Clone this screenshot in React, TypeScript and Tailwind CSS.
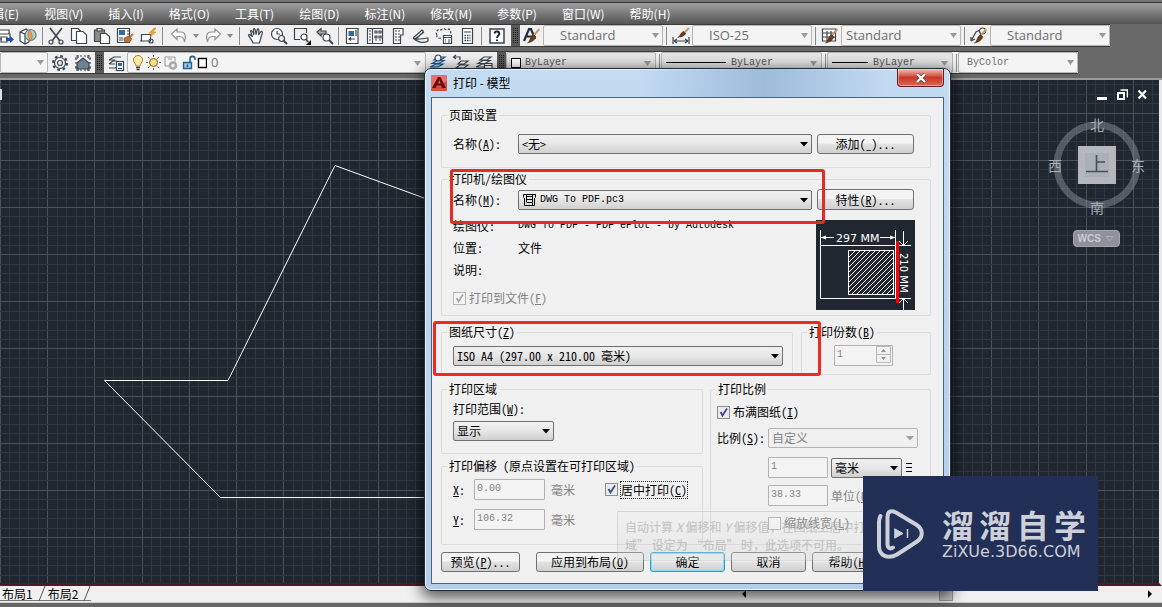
import React from "react";

type Kids = { children?: React.ReactNode };

const menus = ["编辑(E)", "视图(V)", "插入(I)", "格式(O)", "工具(T)", "绘图(D)", "标注(N)", "修改(M)", "参数(P)", "窗口(W)", "帮助(H)"];

/* ---------- toolbar pieces ---------- */

function Tool({ label, children }: Kids & { label: string }) {
  return (
    <button type="button" aria-label={label} className="flex h-full w-[23px] shrink-0 items-center justify-center">
      <svg width="18" height="18" viewBox="0 0 18 18" fill="none" stroke="#3c4650" strokeWidth="1.2">
        {children}
      </svg>
    </button>
  );
}

function Drop({ label }: { label: string }) {
  return (
    <button type="button" aria-label={label} className="flex h-full w-[11px] shrink-0 items-center justify-center">
      <svg width="6" height="4" viewBox="0 0 6 4">
        <path d="M0 0H6L3 4Z" fill="#8a8a8a" />
      </svg>
    </button>
  );
}

function Sep() {
  return <span className="mx-px h-[18px] w-px shrink-0 bg-[#8b8b8b]" />;
}

function Grip() {
  return (
    <span className="flex h-full w-[9px] shrink-0 items-center justify-center bg-[#5a5a5a]">
      <svg width="5" height="15" viewBox="0 0 5 15" fill="#1c1c1c">
        {[0, 2, 4, 6, 8, 10, 12, 14].map((y) => (
          <g key={y}>
            <rect x="0" y={y} width="1" height="1" />
            <rect x="2" y={y} width="1" height="1" />
            <rect x="4" y={y} width="1" height="1" />
          </g>
        ))}
      </svg>
    </span>
  );
}

function StyleSelect({ label, value, width, pad, serif }: { label: string; value: string; width: string; pad: string; serif?: boolean }) {
  return (
    <span className={`relative h-full shrink-0 ${width}`}>
      <select
        aria-label={label}
        className={`block h-full w-full appearance-none rounded-[2px] border border-[#b5b5b5] bg-[#f4f4f4] text-[#6e6e6e] ${pad} ${
          serif ? "font-['Liberation_Mono',monospace] text-[10px]" : "font-['Open_Sans','Noto_Sans_CJK_SC',sans-serif] text-[13px]"
        }`}
      >
        <option>{value}</option>
      </select>
      <svg className="pointer-events-none absolute top-[8px] right-[4px]" width="7" height="5" viewBox="0 0 7 5">
        <path d="M0 0H7L3.500 5Z" fill="#9a9a9a" />
      </svg>
    </span>
  );
}

function LineSelect({ label, width, line }: { label: string; width: string; line: string }) {
  return (
    <span className={`relative flex h-full shrink-0 items-center rounded-[2px] border border-[#b5b5b5] bg-[#e4e4e4] pr-[18px] ${width}`}>
      <span className={`ml-1 h-px shrink-0 bg-black ${line}`} />
      <select aria-label={label} className="ml-[5px] min-w-0 flex-1 appearance-none font-['Liberation_Mono',monospace] text-[10px] text-[#555]">
        <option>ByLayer</option>
      </select>
      <svg className="pointer-events-none absolute top-[8px] right-[4px]" width="7" height="5" viewBox="0 0 7 5">
        <path d="M0 0H7L3.500 5Z" fill="#9a9a9a" />
      </svg>
    </span>
  );
}

const brush = (
  <>
    <path d="M16.500 2L10 9" stroke="#c89a68" strokeWidth="2" />
    <path d="M10.500 7.500L13 10C11 14 8 15 4.500 16C7.500 14 6.500 10.500 10.500 7.500Z" fill="#6a3c1c" stroke="#4a2a12" strokeWidth=".6" />
  </>
);

function StandardBar() {
  return (
    <div className="flex h-[23px] w-max items-center border-y border-[#3a3a3a] bg-[#f0f0f0]">
      <div className="-ml-[7px] flex h-full items-center">
        <Tool label="发布">
          <path d="M3 7V3H13V7M2 7H14V12H10M2 7V12H6M5 10H11V15H5Z" fill="#fff" />
          <path d="M10 11H14V9L18 12.500L14 16V14H10Z" fill="#1e50a8" stroke="none" />
        </Tool>
        <Tool label="三维打印">
          <path d="M1 5L7 2L10 4V15L6 17L1 14ZM1 5L6 7V17" fill="#fff" />
          <circle cx="11.500" cy="8" r="5.500" fill="#a8d8c0" stroke="#5b7c88" />
          <path d="M11 3C8 6 9 10 11 13C15 12 13 7 11 3Z" fill="#e89a58" stroke="#c86d48" strokeWidth=".7" />
        </Tool>
      </div>
      <span className="w-[2px]" />
      <Sep />
      <Tool label="剪切">
        <path d="M3 1L13 14M15 1L5 14" strokeWidth="1.700" />
        <circle cx="4" cy="15" r="2" />
        <circle cx="14" cy="15" r="2" />
      </Tool>
      <Tool label="复制">
        <path d="M1.500 1.500H8L11 4.500V13.500H1.500Z" fill="#fff" />
        <path d="M6.500 4.500H13L16.500 8V16.500H6.500Z" fill="#fff" />
      </Tool>
      <Tool label="粘贴">
        <path d="M1.500 3H11.500V14.500H1.500Z" fill="#8f8d83" />
        <path d="M4 1.500H9V4H4Z" fill="#ddd" />
        <path d="M7.500 6.500H13L16.500 9.500V16.500H7.500Z" fill="#fff" />
      </Tool>
      <Tool label="特性匹配">
        <path d="M1.500 1.500H13.500V15.500H1.500Z" fill="#fff" />
        <path d="M3 3H9V8H3Z" fill="#2e6ca4" stroke="none" />
        <path d="M11 4H13M11 7H13M3 11H7M3 13H7" />
        <path d="M17 7L13 11" stroke="#b97a3d" strokeWidth="2" />
        <path d="M8 11L13 9L16 12L13 16L8 14Z" fill="#b5763b" stroke="#7c4820" strokeWidth=".6" />
      </Tool>
      <Tool label="块编辑器">
        <path d="M2.500 7.500H11.500V14H2.500ZM1 14H4M10 14A2 2 0 1 0 14 14A2 2 0 1 0 10 14" fill="#fff" />
        <path d="M15 1L10 6H13L11 10L17 5H14L17 1Z" fill="#f4a833" stroke="#c97e18" strokeWidth=".5" />
      </Tool>
      <span className="w-[2px]" />
      <Sep />
      <span className="w-[3px]" />
      <Tool label="放弃">
        <path d="M1.500 7L7 2V5H11C15 5 16.500 9 14.500 15C14 11 12.500 9.500 10 9.500H7V12.500Z" stroke="#929292" fill="#fafafa" />
      </Tool>
      <Drop label="放弃列表" />
      <Tool label="重做">
        <path d="M16.500 7L11 2V5H7C3 5 1.500 9 3.500 15C4 11 5.500 9.500 8 9.500H11V12.500Z" stroke="#929292" fill="#fafafa" />
      </Tool>
      <Drop label="重做列表" />
      <span className="w-[3px]" />
      <Sep />
      <span className="w-[3px]" />
      <Tool label="平移">
        <path d="M6 16C5 13 2 10 1.500 8C2.500 7 4 8 5.500 10L3.500 4C4.500 3 5.500 4 7 8L6.500 2C7.500 1 8.500 2 9 7.500L10.500 2C11.500 1.500 12.500 2 11.500 8L14 4.500C15 4 16 5 15 7L13.500 12L12.500 16Z" fill="#fff" />
      </Tool>
      <Tool label="实时缩放">
        <circle cx="7" cy="7" r="5.500" fill="#fff" />
        <path d="M7 4V7H10M11 9H12" />
        <circle cx="11.500" cy="11.500" r="3" fill="#e5eef2" />
        <path d="M13.500 13.500L17 17" strokeWidth="2" />
      </Tool>
      <Tool label="窗口缩放">
        <path d="M13.500 6V1.500H1.500V12.500H7" />
        <circle cx="11" cy="10" r="3" fill="#fff" />
        <path d="M13 12L15 15" strokeWidth="1.800" />
        <path d="M18 13V18H13Z" fill="#000" stroke="none" />
      </Tool>
      <Tool label="缩放上一个">
        <path d="M1 5L5 1.500V4H10V7H5V9Z" fill="#aaa" />
        <circle cx="10.500" cy="10.500" r="3.500" fill="#fff" />
        <path d="M13 13L17 17" strokeWidth="2" />
      </Tool>
      <span className="w-px" />
      <Sep />
      <Tool label="特性">
        <path d="M3.500 1.500H15V16.500H3.500Z" fill="#fff" />
        <path d="M5.500 4H11V9H5.500Z" fill="#2e6ca4" stroke="none" />
        <path d="M13 3V9M6 12H12M8 10.500L6 12L8 13.500" />
      </Tool>
      <Tool label="设计中心">
        <path d="M1.500 1.500H16.500V16.500H1.500ZM6.500 1.500V16.500" fill="#fff" />
        <path d="M3 4H5M3 7H5M3 10H5M3 13H5M9 4H11V6H9ZM13 4H15V6H13ZM9 9H11V11H9ZM13 9H15V11H13ZM9 13H11M13 13H15" />
      </Tool>
      <Tool label="工具选项板">
        <path d="M4.500 1.500H14V8H11.500V16.500H4.500Z" fill="#fff" />
        <path d="M6 4H8M6 7H8M6 10H8M6 13H8M9 4H11M9 7H11M9 10H11M9 13H11" />
      </Tool>
      <Tool label="图纸集">
        <path d="M1 11L10 3C12 3 11 6 9 7L5 11M3 12L12 5M1 11C6 14 10 11 16 11V14C11 17 5 15 1 11Z" fill="#eee" />
      </Tool>
      <Tool label="标记集">
        <path d="M2 8C0 5 3 1 6 3C9 0 11 4 14 2C17 4 15 6 16 8M2 8C1 10 3 12 6 11" strokeDasharray="2.500 1.500" />
        <path d="M8.500 8.500H16.500V16.500H8.500ZM8.500 10.500H16.500M10 13H11M13 13H15M10 15H11M13 15H15" fill="#fff" />
      </Tool>
      <Tool label="快速计算器">
        <path d="M4.500 1.500H14.500V16.500H4.500ZM6 5H13" fill="#fff" />
        <path d="M6.500 8.500H12.500M6.500 11H12.500M6.500 13.500H12.500" strokeDasharray="1.500 1" strokeWidth="1.500" />
      </Tool>
      <span className="w-[2px]" />
      <Sep />
      <span className="w-[2px]" />
      <Tool label="帮助">
        <rect x="2" y="2" width="14" height="14" fill="#fff" strokeWidth="1.500" />
        <path d="M6.500 6.500C7 3.500 11.500 4 11.300 7C11 8.500 9 9 9 11M9 12.500V14" stroke="#152030" strokeWidth="1.800" />
      </Tool>
      <span className="w-[3px]" />
      <Grip />
      <Tool label="文字样式">
        <path d="M1 14L6 2H8L12 12M3 9.500H9" stroke="#1e2c3c" strokeWidth="2.200" />
        {brush}
      </Tool>
      <StyleSelect label="文字样式" value="Standard" width="w-[120px]" pad="pl-[16px]" />
      <span className="w-[2px]" />
      <Sep />
      <span className="w-px" />
      <Tool label="标注样式">
        <path d="M1 10V17M17 10V17M2 14H16M2 14L5 12M2 14L5 16M16 14L13 12M16 14L13 16" />
        <path d="M17 1L12 6" stroke="#c89a68" strokeWidth="2" />
        <path d="M11.500 4L14 6.500C12 10 9 10 5 11C8 9 8 6 11.500 4Z" fill="#6a3c1c" stroke="none" />
      </Tool>
      <StyleSelect label="标注样式" value="ISO-25" width="w-[120px]" pad="pl-[16px]" />
      <span className="w-[2px]" />
      <Sep />
      <span className="w-px" />
      <Tool label="表格样式">
        <path d="M1.500 2H14.500V14H1.500ZM1.500 6H14.500M1.500 10H14.500M6 4V14M10 4V14" fill="#fff" />
        {brush}
      </Tool>
      <StyleSelect label="表格样式" value="Standard" width="w-[120px]" pad="pl-[4px]" />
      <span className="w-[2px]" />
      <Sep />
      <span className="w-px" />
      <Tool label="多重引线样式">
        <path d="M1 14L6 5L10 3M1 14V10M1 14L5 12" />
        <circle cx="12.500" cy="4" r="3" fill="#fff" />
        {brush}
      </Tool>
      <StyleSelect label="多重引线样式" value="Standard" width="w-[120px]" pad="pl-[16px]" />
    </div>
  );
}

const stack = "M1 13H9L14 10H7ZM3 9.500H10L15 6.500H8ZM5 6H12L16 3H9Z";

function LayerBar() {
  return (
    <div className="mt-1 flex h-[23px] w-max items-center border-y border-[#3a3a3a] bg-[#f0f0f0]">
      <StyleSelect label="工作空间" value="" width="w-[48px]" pad="pl-1" />
      <Tool label="工作空间设置">
        <circle cx="9" cy="9" r="2.500" />
        <circle cx="9" cy="9" r="5.500" />
        <circle cx="9" cy="9" r="7" strokeDasharray="2.750 2.750" strokeWidth="2" />
      </Tool>
      <Tool label="我的工作空间">
        <path d="M3 9L9 4L15 9V15H3Z" fill="#6e8296" />
        <path d="M2 2H16V16H2Z" strokeDasharray="2 2" />
        <path d="M1 4H4M14 4H17M1 14H4M14 14H17M4 1V4M14 1V4M4 14V17M14 14V17" />
      </Tool>
      <span className="w-px" />
      <Grip />
      <Tool label="图层特性">
        <path d="M2 6L7 3H14M2 10L6 7H10M2 14H8L10 13M2 6H8M2 10H8" />
        <rect x="9.500" y="7.500" width="7" height="9" fill="#fff" />
        <path d="M11 9H15V12H11Z" fill="#2e6ca4" stroke="none" />
        <path d="M11 14.500H15" />
      </Tool>
      <div className="relative flex h-full w-[299px] shrink-0 items-center rounded-[2px] border border-[#b5b5b5] bg-[#f4f4f4] pl-[3px]">
        <svg width="76" height="18" viewBox="0 0 76 18" fill="none" stroke="#444" strokeWidth="1">
          <path d="M5 12C5 9.500 2.500 9 2.500 6C2.500 0 11.500 0 11.500 6C11.500 9 9 9.500 9 12Z" fill="#ffe9a0" stroke="#a4803c" />
          <path d="M5 13.500H9M5.500 15.500H8.500" strokeWidth="1.500" />
          <circle cx="22.500" cy="8.500" r="4" fill="#ffe08a" stroke="#7a5a20" />
          <path d="M22.500 1V3M22.500 14V16M15 8.500H17M28 8.500H30M17 3L18.500 4.500M28 3L26.500 4.500M17 14L18.500 12.500M28 14L26.500 12.500" stroke="#7a5a20" />
          <path d="M34 3H44V8M34 3V12H38M37 5H41" stroke="#999" />
          <circle cx="42" cy="11.500" r="3" stroke="#aaa" strokeWidth="2.500" />
          <path d="M52.500 8.500H60.500V14.500H52.500Z" fill="#9cc6ea" stroke="#22608e" strokeWidth="1.400" />
          <path d="M59 8V5C59 1.500 64 1.500 64 5V6M56.500 10.500V13" stroke="#22608e" strokeWidth="1.600" />
          <rect x="67.500" y="4.500" width="8" height="9" fill="#fff" stroke="#000" strokeWidth="1.400" />
        </svg>
        <select aria-label="图层" className="ml-1 flex-1 appearance-none font-['Open_Sans',sans-serif] text-[13px] text-[#777]">
          <option>0</option>
        </select>
        <svg className="pointer-events-none absolute top-[8px] right-[4px]" width="7" height="5" viewBox="0 0 7 5">
          <path d="M0 0H7L3.500 5Z" fill="#9a9a9a" />
        </svg>
      </div>
      <Tool label="置为当前">
        <path d={stack} fill="#a8cdea" stroke="#1e5a90" />
        <circle cx="9" cy="4" r="3" fill="#eef5fa" />
      </Tool>
      <Tool label="上一个图层">
        <path d="M4 14H12L16 11H8ZM6 10H12L16 7H9ZM2 3H8V6M4 1L1.500 3L4 5" fill="#fff" />
      </Tool>
      <Tool label="图层状态">
        <path d={stack} fill="#fff" />
        <path d="M9.500 9.500H17V16.500H9.500ZM9.500 11.500H17" fill="#fff" />
      </Tool>
      <span className="w-[2px]" />
      <Grip />
      <span className="relative flex h-full w-[150px] shrink-0 items-center rounded-[2px] border border-[#b5b5b5] bg-[#e4e4e4] pr-4 pl-[4px]">
        <span className="size-[10px] border border-black bg-white" />
        <select aria-label="颜色" className="ml-1 flex-1 appearance-none font-['Liberation_Mono',monospace] text-[10px] text-[#555]">
          <option>ByLayer</option>
        </select>
        <svg className="pointer-events-none absolute top-[8px] right-[4px]" width="7" height="5" viewBox="0 0 7 5">
          <path d="M0 0H7L3.500 5Z" fill="#9a9a9a" />
        </svg>
      </span>
      <span className="w-[2px]" />
      <Sep />
      <LineSelect label="线型" width="w-[161px]" line="w-[60px]" />
      <span className="w-[2px]" />
      <Sep />
      <LineSelect label="线宽" width="w-[126px]" line="w-[36px]" />
      <span className="w-[2px]" />
      <Sep />
      <StyleSelect label="打印样式" value="ByColor" width="w-[120px]" pad="pl-[8px]" serif />
    </div>
  );
}

/* ---------- drawing area ---------- */

const columns = Array.from({ length: 300 }, (_, i) => i);
const rows = Array.from({ length: 160 }, (_, i) => i);

function Drawing() {
  return (
    <div className="relative min-h-0 flex-1 overflow-hidden border-r-[3px] border-b-[3px] border-r-[#e8e8e8] border-b-[#4b1c28] bg-[#212730]">
      <svg className="absolute inset-0 h-full w-full" fill="none">
        <g shapeRendering="crispEdges" strokeWidth="1">
          {columns.map((i) => {
            const x = Math.round(i * 9.44) + 0.5;
            return <line key={i} x1={x} x2={x} y1="0" y2="1600" stroke={i % 5 === 0 ? "#4a525e" : "#2e3640"} />;
          })}
          {rows.map((i) => {
            const y = Math.round(i * 9.43 - 14.500) + 0.5;
            return <line key={i} y1={y} y2={y} x1="0" x2="2900" stroke={i % 5 === 0 ? "#4a525e" : "#2e3640"} />;
          })}
        </g>
        <path d="M520 153L335 85.500L228 300.500H104.500L220.500 417.500H520" stroke="#fff" />
        <rect x="0" y="9" width="2" height="11" fill="#dde" />
      </svg>
      <div className="absolute top-[9px] right-[11px] flex items-center gap-[9px]">
        <button type="button" aria-label="最小化">
          <svg width="11" height="11" viewBox="0 0 11 11">
            <path d="M0 8H10V11H0Z" fill="#fff" />
          </svg>
        </button>
        <button type="button" aria-label="还原">
          <svg width="11" height="11" viewBox="0 0 11 11" fill="none" stroke="#fff">
            <path d="M1 4H7V10H1Z" strokeWidth="2" />
            <path d="M3.500 1H10.500V8.500" strokeWidth="1.500" />
          </svg>
        </button>
        <button type="button" aria-label="关闭图形">
          <svg width="11" height="11" viewBox="0 0 11 11">
            <path d="M1.500 1.500L9 9.500M9 1.500L1.500 9.500" stroke="#fff" strokeWidth="2.200" />
          </svg>
        </button>
      </div>
      <div className="absolute top-[32px] right-[11px] flex flex-col items-center gap-[14px]">
        <svg width="104" height="104" viewBox="0 0 104 104" className="font-['Noto_Sans_CJK_SC',sans-serif] text-[14px]" textAnchor="middle">
          <circle cx="53" cy="53" r="40" fill="none" stroke="#8a8f98" strokeOpacity=".5" strokeWidth="7" />
          <rect x="34" y="34" width="38" height="38" fill="#b4b7bb" />
          <rect x="41" y="41" width="24" height="24" fill="#a9b0b7" />
          <path d="M52.500 43V59.500M52.500 50H61M42 59.500H64" stroke="#4a4f55" strokeWidth="1.600" />
          <text x="53" y="18" fill="#a9adb3">北</text>
          <text x="53" y="101" fill="#a9adb3">南</text>
          <text x="11" y="59" fill="#a9adb3">西</text>
          <text x="94" y="59" fill="#a9adb3">东</text>
        </svg>
        <button type="button" className="flex h-[17px] w-[47px] items-center gap-1 rounded-[4px] border border-[#a3a4ae] bg-[#8e909c] pl-1 font-['Liberation_Sans',sans-serif] text-[10px] font-bold text-[#c9cad2]">
          WCS
          <svg width="9" height="6" viewBox="0 0 9 6">
            <path d="M1 .500H8L4.500 5Z" fill="none" stroke="#a9abb5" />
          </svg>
        </button>
      </div>
    </div>
  );
}

function LayoutTabs() {
  return (
    <div className="flex h-[17px] shrink-0 items-stretch border-b border-[#cfcfcf] bg-[#f0f0f0] font-['Noto_Sans_CJK_SC',sans-serif] text-[12px] leading-[15px] text-black">
      {["布局1", "布局2"].map((t) => (
        <button key={t} type="button" className="flex h-[15px] items-center border-b border-[#777] pl-[2px]">
          {t}
          <svg width="13" height="15" viewBox="0 0 13 15" fill="none" stroke="#555">
            <path d="M6 15L12 0" />
          </svg>
        </button>
      ))}
      <div className="ml-auto flex w-[422px] items-center">
        <svg width="8" height="8" viewBox="0 0 8 8">
          <path d="M6 0V8L2 4Z" />
        </svg>
        <span className="ml-[191px] h-[13px] w-[14px] border border-[#999] bg-[#c8c8c8]" />
        <svg className="mr-[8px] ml-auto" width="8" height="8" viewBox="0 0 8 8">
          <path d="M2 0V8L6 4Z" />
        </svg>
      </div>
    </div>
  );
}

/* ---------- dialog pieces ---------- */

function Group({ title, className, children }: Kids & { title: React.ReactNode; className: string }) {
  return (
    <fieldset className={`min-w-0 rounded-[2px] border border-[#dadcde] ${className}`}>
      <legend className="ml-[5px] h-4 px-[2px] leading-4">{title}</legend>
      {children}
    </fieldset>
  );
}

function Combo({ id, label, value, width, disabled, icon }: { id: string; label?: string; value: string; width: string; disabled?: boolean; icon?: boolean }) {
  return (
    <span className={`relative h-5 shrink-0 ${width}`}>
      <select
        id={id}
        aria-label={label}
        disabled={disabled}
        className={`block h-5 w-full appearance-none rounded-[2px] border opacity-100 ${
          icon ? "pl-[21px] font-['Liberation_Mono',monospace] text-[10px]" : "pl-[3px]"
        } ${
          disabled ? "border-[#b4b4b4] bg-[#f0f0f0] text-[#838383]" : "border-[#707070] bg-linear-to-b from-[#f1f1f1] via-[#e6e6e6] to-[#cfcfcf]"
        }`}
      >
        <option>{value}</option>
      </select>
      {icon && (
        <svg className="pointer-events-none absolute top-[3px] left-[5px]" width="13" height="14" viewBox="0 0 13 14" fill="none" stroke="#000">
          <path d="M.500 4.500V1.500H12.500V4.500M3.500 1V9M9.500 1V9M3.500 3.500H9.500M3.500 6.500H9.500M1.500 5V12.500H11.500V5M3.500 9.500H9.500V12.500" />
        </svg>
      )}
      <svg className="pointer-events-none absolute top-[8px] right-[4px]" width="8" height="5" viewBox="0 0 8 5">
        <path d="M0 0H8L4 4.500Z" fill={disabled ? "#a0a0a0" : "#000"} />
      </svg>
    </span>
  );
}

function Push({ width, primary, height, children }: Kids & { width: string; primary?: boolean; height?: string }) {
  return (
    <button
      type="button"
      className={`flex shrink-0 items-center justify-center rounded-[3px] border bg-linear-to-b from-[#f3f3f3] from-45% via-[#e3e3e3] via-50% to-[#cfcfcf] whitespace-nowrap ${width} ${height ?? "h-[20px]"} ${
        primary ? "border-[#2c9cc8] ring-1 ring-[#7fdcf8] ring-inset" : "border-[#707070]"
      }`}
    >
      {children}
    </button>
  );
}

function Check({ id, checked, disabled, dotted, children }: Kids & { id: string; checked?: boolean; disabled?: boolean; dotted?: boolean }) {
  return (
    <span className={`flex h-4 items-center gap-[3px] ${disabled ? "text-[#838383]" : ""}`}>
      <span className="relative size-[13px] shrink-0">
        <input
          id={id}
          type="checkbox"
          defaultChecked={checked}
          disabled={disabled}
          className={`block size-[13px] appearance-none border ${disabled ? "border-[#b5b5b5] bg-[#f4f4f4]" : "border-[#8e8f8f] bg-[#e8eaee]"}`}
        />
        {checked && (
          <svg className="pointer-events-none absolute inset-0" width="13" height="13" viewBox="0 0 13 13" fill="none">
            <path d="M3.500 6L5.500 9.500L10 2.500" stroke={disabled ? "#a8a8a8" : "#3a4f8a"} strokeWidth="1.800" />
          </svg>
        )}
      </span>
      <label htmlFor={id} className={`whitespace-nowrap ${dotted ? "outline-1 outline-dotted outline-[#333]" : ""}`}>
        {children}
      </label>
    </span>
  );
}

function Field({ id, label, value, width }: { id: string; label?: string; value: string; width: string }) {
  return (
    <input
      id={id}
      aria-label={label}
      defaultValue={value}
      disabled
      className={`h-[21px] shrink-0 rounded-[1px] border border-[#b2b2b2] bg-[#f3f3f3] pb-[2px] pl-[2px] font-['Liberation_Mono',monospace] text-[10px] text-[#838383] ${width}`}
    />
  );
}

function PaperPreview() {
  return (
    <svg className="shrink-0" width="99" height="90" viewBox="0 0 99 90" fill="none" stroke="#fff">
      <defs>
        <clipPath id="plot-area">
          <rect x="32" y="30" width="46" height="45" />
        </clipPath>
      </defs>
      <rect width="99" height="90" fill="#212730" stroke="none" />
      <path d="M4.500 10V25M79.500 10V25M4.500 17.500H18M64 17.500H79.500M79 25.500H95M79 78.500H95M87.500 11V25M87.500 79V90" />
      <path d="M4.500 17.500L10 15.500V19.500ZM79.500 17.500L74 15.500V19.500Z" fill="#fff" stroke="none" />
      <path d="M83 21L87.500 25.500L92 21M83 83L87.500 78.500L92 83" />
      <rect x="4.500" y="25.500" width="75" height="53" />
      <rect x="32.500" y="30.500" width="45" height="44" />
      <g clipPath="url(#plot-area)">
        {Array.from({ length: 19 }, (_, i) => (
          <path key={i} d={`M${-8 + i * 5} 78l50 -50`} />
        ))}
      </g>
      <path d="M81.500 21V83" stroke="#f00" strokeWidth="3" />
      <g fill="#fff" stroke="none" className="font-['DejaVu_Sans',sans-serif] text-[11px]">
        <text x="20" y="21.500">297 MM</text>
        <text className="text-[10px]" transform="translate(83.500 33) rotate(90)">210 MM</text>
      </g>
    </svg>
  );
}

function PlotDialog() {
  return (
    <section
      aria-label="打印 - 模型"
      className="absolute top-[68px] left-[424px] w-[527px] rounded-[7px] border border-[#1f2c3a] bg-linear-to-b from-[#c4dcf2] via-[#bcd4ee] to-[#b4cdea] px-[6px] pb-[6px] shadow-[inset_0_0_0_1px_#eaf4fc,0_4px_14px_3px_rgba(0,0,0,0.6)]"
    >
      <header className="flex h-7 items-start bg-linear-to-r from-transparent from-40% via-[#9dbcdb] via-65% to-transparent to-90%">
        <svg className="mt-[6px]" width="16" height="16" viewBox="0 0 16 16">
          <rect width="16" height="16" rx="1" fill="#d84a44" />
          <path d="M0 0H16V6L0 14Z" fill="#ee8a80" opacity=".6" />
          <path d="M1 13L7 2H9.500L15 13H11L10 10.500H6L4.500 13Z" fill="#6c0c0e" />
          <path d="M7 8.500L8.500 5L9.500 8.500Z" fill="#e46058" />
        </svg>
        <h1 className="mt-[5px] ml-[6px] font-['Noto_Sans_CJK_SC',sans-serif] text-[12px] leading-[18px] text-black">打印 - 模型</h1>
        <button type="button" aria-label="关闭" className="ml-auto flex h-[18px] w-[47px] items-center justify-center rounded-b-[4px] border border-t-0 border-[#5c2024] bg-linear-to-b from-[#e9a79b] from-10% via-[#c8392c] via-50% to-[#d9664e] shadow-[inset_0_0_0_1px_rgba(255,255,255,0.4)]">
          <svg width="12" height="10" viewBox="0 0 12 10">
            <path d="M2 1L10 9M10 1L2 9" stroke="#5b4545" strokeWidth="3.600" />
            <path d="M2 1L10 9M10 1L2 9" stroke="#fff" strokeWidth="2.300" />
          </svg>
        </button>
      </header>
      <form className="border border-[#4d6378] bg-[#f0f0f0] pt-[9px] pr-[12px] pb-[11px] pl-[9px] font-['Noto_Sans_CJK_SC',sans-serif] text-[12px] leading-4 text-black [font-feature-settings:'hwid']">
        <Group title="页面设置" className="pb-[13px]">
          <div className="flex items-center pt-[11px] pl-[11px]">
            <label htmlFor="setup" className="w-[65px]">名称(<u>A</u>):</label>
            <Combo id="setup" value="<无>" width="w-[294px]" />
            <span className="w-[5px]" />
            <Push width="w-[97px]">添加(_)...</Push>
          </div>
        </Group>

        <Group title="打印机/绘图仪" className="mt-[3px] pb-[5px]">
          <div className="flex items-center pt-[2px] pl-[11px]">
            <label htmlFor="printer" className="w-[65px]">名称(<u>M</u>):</label>
            <Combo id="printer" value="DWG To PDF.pc3" width="w-[294px]" icon />
            <span className="w-[5px]" />
            <Push width="w-[97px]" height="h-[21px]">特性(<u>R</u>)...</Push>
          </div>
          <div className="flex items-start justify-between pr-[15px] pl-[11px]">
            <div className="pt-[5px]">
              <dl className="grid grid-cols-[65px_auto] leading-[22px]">
                <dt>绘图仪:</dt>
                <dd className="font-['Liberation_Mono',monospace] text-[10px]">DWG To PDF - PDF ePlot - by Autodesk</dd>
                <dt>位置:</dt>
                <dd>文件</dd>
                <dt>说明:</dt>
                <dd />
              </dl>
              <div className="pt-[9px]">
                <Check id="tofile" checked disabled>打印到文件(<u>F</u>)</Check>
              </div>
            </div>
            <div className="pt-[10px]">
              <PaperPreview />
            </div>
          </div>
        </Group>

        <div className="mt-[8px] flex gap-[8px]">
          <Group title={<label htmlFor="paper">图纸尺寸(<u>Z</u>)</label>} className="w-[352px] pb-[8px]">
            <div className="flex pt-[6px] pl-[11px]">
              <Combo id="paper" value="ISO A4 (297.00 x 210.00 毫米)" width="w-[330px]" />
            </div>
          </Group>
          <Group title={<label htmlFor="copies">打印份数(<u>B</u>)</label>} className="flex-1">
            <div className="flex pt-[4px] pl-[32px]">
              <span className="relative">
                <Field id="copies" value="1" width="w-[59px]" />
                <svg className="absolute top-[2px] right-[2px]" width="15" height="17" viewBox="0 0 15 17" fill="#f0f0f0" stroke="#b8b8b8">
                  <path d="M.500 .500H14.500V8.500H.500ZM.500 8.500H14.500V16.500H.500Z" />
                  <path d="M5 6L7.500 3L10 6ZM5 11L7.500 14L10 11Z" fill="#909090" stroke="none" />
                </svg>
              </span>
            </div>
          </Group>
        </div>

        <div className="mt-[6px] flex gap-[7px]">
          <div className="flex w-[262px] flex-col gap-[4px]">
            <Group title="打印区域" className="pb-[12px]">
              <div className="flex flex-col gap-[4px] pt-[4px] pl-[11px]">
                <label htmlFor="range">打印范围(<u>W</u>):</label>
                <Combo id="range" value="显示" width="w-[101px]" />
              </div>
            </Group>
            <Group title="打印偏移 (原点设置在可打印区域)" className="pb-[14px]">
              <div className="flex flex-col gap-[9px] pt-[5px] pl-[11px]">
                <div className="flex items-center">
                  <label htmlFor="offx" className="w-[21px]"><u>X</u>:</label>
                  <Field id="offx" value="0.00" width="w-[71px]" />
                  <span className="w-[60px] pl-[6px] text-[#838383]">毫米</span>
                  <Check id="center" checked dotted>居中打印(<u>C</u>)</Check>
                </div>
                <div className="flex items-center">
                  <label htmlFor="offy" className="w-[21px]"><u>Y</u>:</label>
                  <Field id="offy" value="106.32" width="w-[71px]" />
                  <span className="pl-[6px] text-[#838383]">毫米</span>
                </div>
              </div>
            </Group>
          </div>
          <Group title="打印比例" className="flex-1">
            <div className="pt-[7px] pl-[6px]">
              <Check id="fit" checked>布满图纸(<u>I</u>)</Check>
              <div className="mt-[8px] flex items-center">
                <label htmlFor="scale" className="w-[51px]">比例(<u>S</u>):</label>
                <Combo id="scale" value="自定义" width="w-[150px]" disabled />
              </div>
              <div className="mt-[9px] flex items-center pl-[51px]">
                <Field id="paperunits" label="图纸单位" value="1" width="w-[60px]" />
                <span className="w-[3px]" />
                <Combo id="unit" label="单位类型" value="毫米" width="w-[71px]" />
                <svg className="ml-[3px]" width="8" height="9" viewBox="0 0 8 9" stroke="#000">
                  <path d="M1 .500H7M1 4.500H7M1 8.500H7" />
                </svg>
              </div>
              <div className="mt-[7px] flex items-center gap-[3px] pl-[51px] text-[#838383]">
                <Field id="drawunits" value="38.33" width="w-[60px]" />
                <label htmlFor="drawunits">单位(<u>U</u>)</label>
              </div>
              <div className="mt-[9px] pl-[51px]">
                <Check id="lineweights" disabled>缩放线宽(<u>L</u>)</Check>
              </div>
            </div>
          </Group>
        </div>

        <div className="mt-[7px] flex">
          <Push width="w-[79px]">预览(<u>P</u>)...</Push>
          <span className="w-[16px]" />
          <div className="flex gap-[6px]">
            <Push width="w-[108px]">应用到布局(<u>O</u>)</Push>
            <Push width="w-[75px]" primary>确定</Push>
            <Push width="w-[75px]">取消</Push>
            <Push width="w-[75px]">帮助(<u>H</u>)</Push>
          </div>
        </div>
      </form>
      <div role="tooltip" className="pointer-events-none absolute top-[442px] left-[192px] h-[50px] w-[300px] overflow-hidden border border-[#aaa]/30 bg-linear-to-b from-transparent to-[#d8d8d8]/40 pt-[6px] pl-[7px] font-['Noto_Sans_CJK_SC',sans-serif] text-[12px] leading-[18px] font-medium whitespace-nowrap text-[#a0a0a0]/50">
        自动计算 <i>X</i> 偏移和 <i>Y</i> 偏移值，在图纸上居中打印。
        <br />
        域” 设定为 “布局” 时，此选项不可用。
      </div>
    </section>
  );
}

function Watermark() {
  return (
    <aside className="absolute top-[476px] left-[863px] flex h-[115px] w-[235px] bg-[#222f57] text-[#cdd0d8]">
      <svg className="shrink-0" width="79" height="115" viewBox="0 0 79 115" fill="none" stroke="#cdd0d8" strokeWidth="3.500" strokeLinecap="round" strokeLinejoin="round">
        <path d="M30 71.500C27.500 73.500 24.500 72 24.500 68V41C24.500 35 28 34 33 36.500L53 48.500C60.500 53 60.500 61 54 65.500L34 78.500C25 83.500 16 80 16 70V46C16 43 16.500 42 17.500 40" strokeWidth="4" />
        <path d="M32 53L40 57.500L32 62Z" fill="#cdd0d8" strokeWidth="1" />
        <path d="M44.500 53V62" strokeWidth="1.500" strokeLinecap="butt" />
      </svg>
      <div className="flex w-[144px] flex-col pt-[30px]">
        <p className="flex justify-between font-['Noto_Sans_CJK_SC',sans-serif] text-[32px] leading-[36px] font-bold">
          <span>溜</span>
          <span>溜</span>
          <span>自</span>
          <span>学</span>
        </p>
        <p className="font-['DejaVu_Sans',sans-serif] text-[16px] leading-[20px] whitespace-nowrap">ZiXUe.3D66.COM</p>
      </div>
    </aside>
  );
}

export default function App() {
  return (
    <main className="relative flex h-screen flex-col overflow-hidden bg-[#686868]">
      <div className="h-[2px] shrink-0 bg-[#747474]" />
      <nav className="flex h-[22px] shrink-0 items-center gap-[25px] border-t border-[#333] bg-linear-to-b from-[#a0a0a0] to-[#555] font-['Noto_Sans_CJK_SC',sans-serif] text-[12px] whitespace-nowrap text-white">
        {menus.map((m, i) => (
          <button key={m} type="button" className={i === 0 ? "-ml-5" : ""}>
            {m}
          </button>
        ))}
      </nav>
      <StandardBar />
      <LayerBar />
      <div className="mt-[4px] h-[2px] shrink-0 bg-[#9a9a9a]" />
      <Drawing />
      <LayoutTabs />
      <div className="h-[4px] shrink-0 bg-[#666]" />
      <PlotDialog />
      <div className="pointer-events-none absolute top-[169px] left-[450px] h-[55px] w-[375px] rounded-[3px] border-[3px] border-[#e12d22]" />
      <div className="pointer-events-none absolute top-[321px] left-[433px] h-[55px] w-[388px] rounded-[3px] border-[3px] border-[#ee2a20]" />
      <Watermark />
    </main>
  );
}
